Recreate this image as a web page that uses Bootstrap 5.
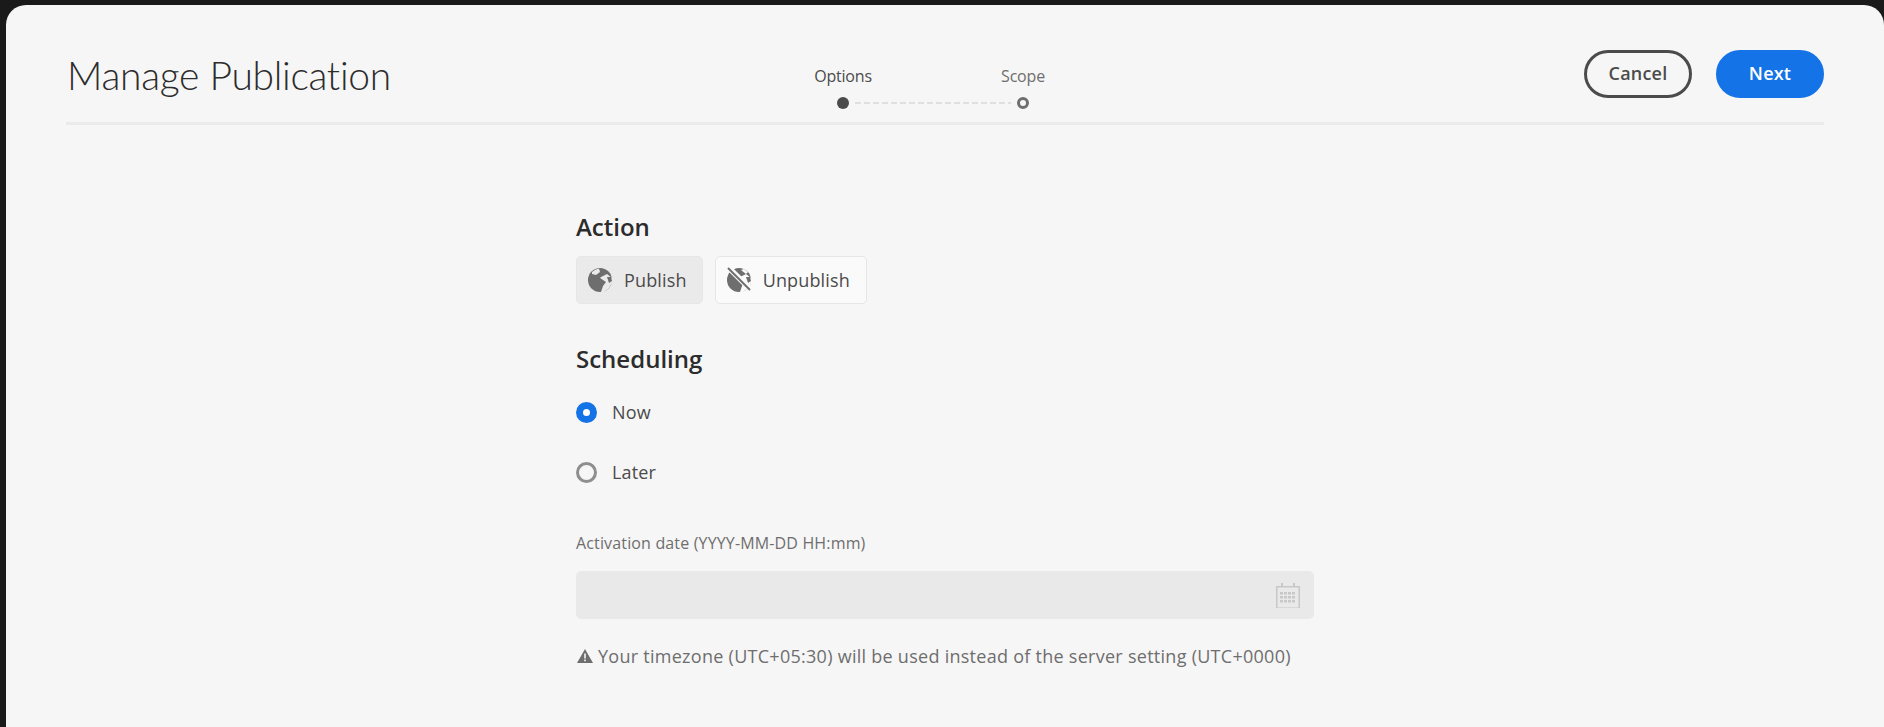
<!DOCTYPE html>
<html>
<head>
  <title>Manage Publication</title>
  <link href="https://cdn.jsdelivr.net/npm/bootstrap@5.3.0/dist/css/bootstrap.min.css" rel="stylesheet">
  <style>
    html, body { height: 100%; }
    body { background: #1a1a1a; font-family: "Open Sans", "Noto Sans", sans-serif; overflow: hidden; padding: 5px 0 0 6px; }
    .pub-panel { background: #f6f6f6; height: 100%; border-radius: 20px 20px 0 0; padding: 0 60px; }
    .pub-header { height: 120px; border-bottom: 3px solid #ebebeb; padding-top: 45px; }
    .pub-side { flex: 1 1 0; }
    .pub-title { font-family: "Lato", sans-serif; font-weight: 300; font-size: 39px; line-height: 48px; color: #2c2c2c; margin: 1px 0 0 1px; letter-spacing: -.3px; }
    .pub-steps { width: 360px; margin-right: 24px; padding-top: 16px; }
    .pub-step { color: #4b4b4b; font-size: 16px; line-height: 20px; text-align: center; letter-spacing: -.2px; }
    .pub-step + .pub-step { color: #6e6e6e; }
    .pub-dots { height: 12px; margin-top: 11px; padding: 0 84px; }
    .pub-dot { width: 12px; height: 12px; border-radius: 50%; background: #4b4b4b; flex: none; }
    .pub-dot-open { background: #f6f6f6; border: 3px solid #6e6e6e; }
    .pub-dash { flex: 1; height: 2px; margin: 0 6px; background: repeating-linear-gradient(90deg, #e0e0e0 0 6px, transparent 6px 9px); }
    .pub-btn { width: 108px; height: 48px; font-size: 18px; font-weight: 600; line-height: 1; padding: 0 0 2px; letter-spacing: .2px; }
    .pub-cancel { border: 3px solid #4b4b4b; color: #4b4b4b; background: transparent; }
    .pub-next { background: #1473e6; border: 3px solid #1473e6; color: #fff; }
    .pub-form { width: 738px; padding-top: 84px; }
    .pub-heading { font-size: 24px; font-weight: 600; line-height: 36px; color: #2c2c2c; margin: 0 0 11px; }
    .pub-choice { height: 48px; font-size: 18px; color: #4b4b4b; border-radius: 5px; padding: 0 16px 0 10px; border: 1px solid #e6e6e6; background: #fafafa; gap: 11px; letter-spacing: .15px; }
    .pub-choice.is-active { background: #eaeaea; padding-right: 15px; }
    .pub-choice svg { width: 26px; height: 26px; flex: none; }
    .pub-actions { gap: 12px; margin-bottom: 37px; }
    .pub-radio { gap: 15px; height: 24px; font-size: 18px; color: #4b4b4b; margin-top: 36px; line-height: 24px; letter-spacing: .15px; }
    .pub-radio-first { margin-top: 23px; }
    .pub-mark { width: 21px; height: 21px; border-radius: 50%; border: 3px solid #8e8e8e; background: #f6f6f6; flex: none; }
    .pub-mark.is-on { border: 7px solid #1473e6; background: #fff; }
    .pub-label { font-size: 16px; line-height: 22px; color: #6e6e6e; margin: 48px 0 17px; letter-spacing: .15px; }
    .pub-input { height: 48px; background: #e9e9e9; border-radius: 5px; padding-right: 13px; }
    .pub-note { font-size: 18px; line-height: 24px; color: #6e6e6e; margin: 25px 0 0 1px; gap: 5px; letter-spacing: .27px; }
  </style>
</head>
<body>
  <div class="pub-panel">
    <!-- Header -->
    <header class="pub-header d-flex align-items-start">
      <div class="pub-side">
        <h1 class="pub-title">Manage Publication</h1>
      </div>
      <div class="pub-steps">
        <div class="row g-0">
          <div class="col-6 pub-step">Options</div>
          <div class="col-6 pub-step">Scope</div>
        </div>
        <div class="pub-dots d-flex align-items-center">
          <span class="pub-dot"></span>
          <span class="pub-dash"></span>
          <span class="pub-dot pub-dot-open"></span>
        </div>
      </div>
      <div class="pub-side d-flex justify-content-end gap-4">
        <button class="btn pub-btn pub-cancel rounded-pill" type="button">Cancel</button>
        <button class="btn pub-btn pub-next rounded-pill" type="button">Next</button>
      </div>
    </header>

    <!-- Form -->
    <div class="pub-form mx-auto">
      <h2 class="pub-heading">Action</h2>
      <div class="pub-actions d-flex">
        <button class="btn pub-choice is-active d-flex align-items-center" type="button">
          <svg viewBox="0 0 26 26"><circle cx="13" cy="13" r="12" fill="#6e6e6e"/><path d="M5 5Q8 2 12 1.500L13 5 9 8 5 7zM14 10l6-3 5 4v5l-3 5-5 4h-3l2-6 3-4-3-2-3-2z" fill="#eaeaea"/><path d="M20 10l4 0 1 4-3 2z" fill="#6e6e6e"/></svg>
          Publish
        </button>
        <button class="btn pub-choice d-flex align-items-center" type="button">
          <svg viewBox="0 0 26 26"><circle cx="13" cy="13" r="12" fill="#6e6e6e"/><path d="M15 3l3-1 4 3-2 2zM14 10l6-3 5 4v5l-3 5-5 4h-3l2-6 3-4-3-2-3-2z" fill="#fafafa"/><path d="M20 10l4 0 1 4-3 2z" fill="#6e6e6e"/><path d="M2 0L26 24" stroke="#fafafa" stroke-width="5.500"/><path d="M2 1L24 23" stroke="#6e6e6e" stroke-width="2"/></svg>
          Unpublish
        </button>
      </div>

      <h2 class="pub-heading mb-0">Scheduling</h2>
      <div class="pub-radio pub-radio-first d-flex align-items-center"><span class="pub-mark is-on"></span>Now</div>
      <div class="pub-radio d-flex align-items-center"><span class="pub-mark"></span>Later</div>

      <div class="pub-label">Activation date (YYYY-MM-DD HH:mm)</div>
      <div class="pub-input d-flex align-items-center justify-content-end">
        <svg width="26" height="26" viewBox="0 0 26 26" fill="#c8c8c8">
          <path d="M1 4h5V1h2v3h10V1h2v3h5v23H1zM2.500 5.500v20h21v-20z" fill-rule="evenodd"/>
          <g><rect x="5" y="10" width="3" height="2.500"/><rect x="9" y="10" width="3" height="2.500"/><rect x="13" y="10" width="3" height="2.500"/><rect x="17" y="10" width="3" height="2.500"/><rect x="5" y="14" width="3" height="2.500"/><rect x="9" y="14" width="3" height="2.500"/><rect x="13" y="14" width="3" height="2.500"/><rect x="17" y="14" width="3" height="2.500"/><rect x="5" y="18" width="3" height="2.500"/><rect x="9" y="18" width="3" height="2.500"/><rect x="13" y="18" width="3" height="2.500"/><rect x="17" y="18" width="3" height="2.500"/></g>
        </svg>
      </div>
      <div class="pub-note d-flex align-items-center">
        <svg width="16" height="14" viewBox="0 0 16 14"><path d="M8 0l8 14H0z" fill="#6e6e6e"/><path d="M7.200 4.500h1.600v5H7.200zM7.200 10.500h1.600v1.700H7.200z" fill="#f6f6f6"/></svg>
        Your timezone (UTC+05:30) will be used instead of the server setting (UTC+0000)
      </div>
    </div>
  </div>
  <script src="https://cdn.jsdelivr.net/npm/bootstrap@5.3.0/dist/js/bootstrap.bundle.min.js"></script>
</body>
</html>
